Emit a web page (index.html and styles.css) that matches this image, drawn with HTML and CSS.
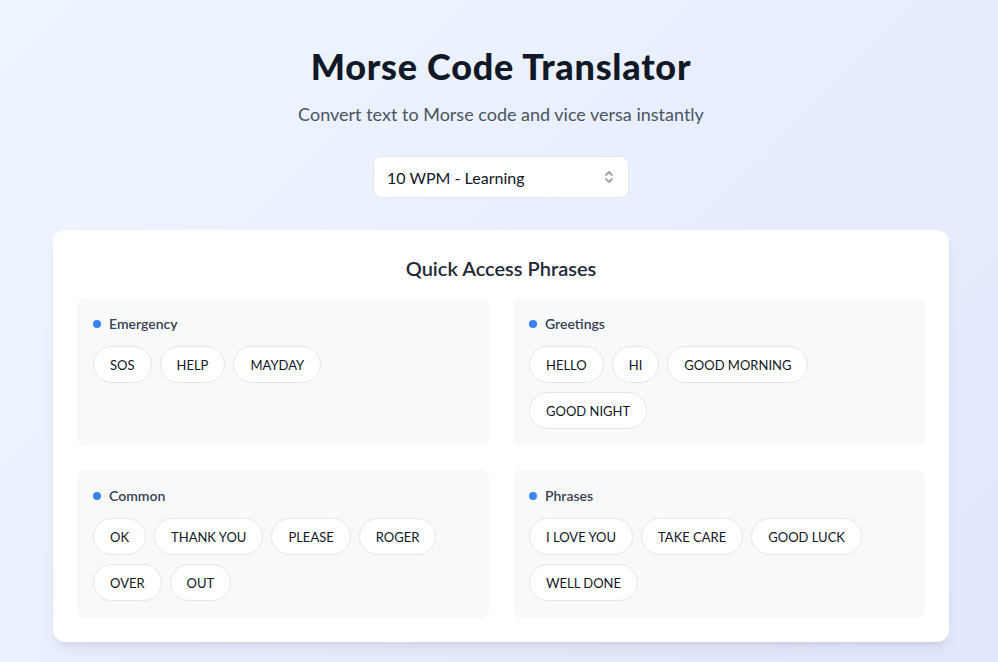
FILE: index.html
```html
<!DOCTYPE html>
<html lang="en">
<head>
<meta charset="utf-8">
<title>Morse Code Translator</title>
<link rel="stylesheet" href="styles.css">
</head>
<body>
<div class="page">
  <header class="header">
    <h1 class="title">Morse Code Translator</h1>
    <p class="subtitle">Convert text to Morse code and vice versa instantly</p>
    <div class="select">
      <span class="select-value">10 WPM - Learning</span>
      <svg class="select-arrow" width="10" height="16" viewBox="0 0 10 16" fill="none" stroke="#9ca3af" stroke-width="1.8" stroke-linecap="round" stroke-linejoin="round"><path d="M2 6 L5 3 L8 6"/><path d="M2 10 L5 13 L8 10"/></svg>
    </div>
  </header>

  <section class="card">
    <h2 class="card-title">Quick Access Phrases</h2>
    <div class="groups">
      <div class="group">
        <div class="group-label"><span class="dot"></span>Emergency</div>
        <div class="pills">
          <button class="pill">SOS</button>
          <button class="pill">HELP</button>
          <button class="pill">MAYDAY</button>
        </div>
      </div>
      <div class="group">
        <div class="group-label"><span class="dot"></span>Greetings</div>
        <div class="pills">
          <button class="pill">HELLO</button>
          <button class="pill">HI</button>
          <button class="pill">GOOD MORNING</button>
          <button class="pill">GOOD NIGHT</button>
        </div>
      </div>
      <div class="group">
        <div class="group-label"><span class="dot"></span>Common</div>
        <div class="pills">
          <button class="pill">OK</button>
          <button class="pill">THANK YOU</button>
          <button class="pill">PLEASE</button>
          <button class="pill">ROGER</button>
          <button class="pill">OVER</button>
          <button class="pill">OUT</button>
        </div>
      </div>
      <div class="group">
        <div class="group-label"><span class="dot"></span>Phrases</div>
        <div class="pills">
          <button class="pill">I LOVE YOU</button>
          <button class="pill">TAKE CARE</button>
          <button class="pill">GOOD LUCK</button>
          <button class="pill">WELL DONE</button>
        </div>
      </div>
    </div>
  </section>
</div>
</body>
</html>
```

FILE: styles.css
```css
* { box-sizing: border-box; }
html, body { margin: 0; padding: 0; }
body {
  font-family: "Lato", "Open Sans", sans-serif;
  background: linear-gradient(135deg, #eff5ff 0%, #e2e8fd 100%);
  min-height: 662px;
  color: #111827;
}
.page {
  width: 896px;
  margin: 0 auto;
  padding: 42px 0 20px;
  position: relative;
  left: 2px;
}
.header {
  display: flex;
  flex-direction: column;
  align-items: center;
}
.title {
  margin: 0;
  font-size: 36px;
  line-height: 48px;
  font-weight: 900;
  letter-spacing: 0.75px;
  color: #111827;
}
.subtitle {
  margin: 12px 0 0;
  font-size: 18px;
  line-height: 24px;
  color: #4b5563;
}
.select {
  margin-top: 30px;
  width: 256px;
  height: 42px;
  background: #fff;
  border: 1px solid #e5e7eb;
  border-radius: 8px;
  display: flex;
  align-items: center;
  justify-content: space-between;
  padding: 0 14px 0 13px;
}
.select-value {
  font-size: 16px;
  color: #111827;
}
.card {
  margin-top: 32px;
  background: #fff;
  border-radius: 12px;
  box-shadow: 0 10px 15px -3px rgba(0,0,0,0.08), 0 4px 6px -4px rgba(0,0,0,0.08);
  padding: 24px 24px 24px;
}
.card-title {
  margin: 0 0 16px;
  text-align: center;
  font-size: 20px;
  line-height: 28px;
  font-weight: 600;
  color: #1f2937;
}
.groups {
  display: grid;
  grid-template-columns: 1fr 1fr;
  gap: 24px 24px;
}
.group {
  background: #f8f9fb;
  border-radius: 8px;
  padding: 16px 16px 17px;
}
.group-label {
  display: flex;
  align-items: center;
  gap: 8px;
  font-size: 14px;
  line-height: 20px;
  font-weight: 600;
  color: #374151;
  margin-bottom: 12px;
}
.dot {
  width: 8px;
  height: 8px;
  border-radius: 50%;
  background: #3b82f6;
}
.pills {
  display: flex;
  flex-wrap: wrap;
  gap: 9px 8px;
}
.pill {
  font-family: "Lato", "Open Sans", sans-serif;
  font-size: 13px;
  height: 37px;
  padding: 0 16px;
  background: #fff;
  border: 1px solid #e5e7eb;
  border-radius: 19px;
  color: #111827;
  cursor: pointer;
}
```
